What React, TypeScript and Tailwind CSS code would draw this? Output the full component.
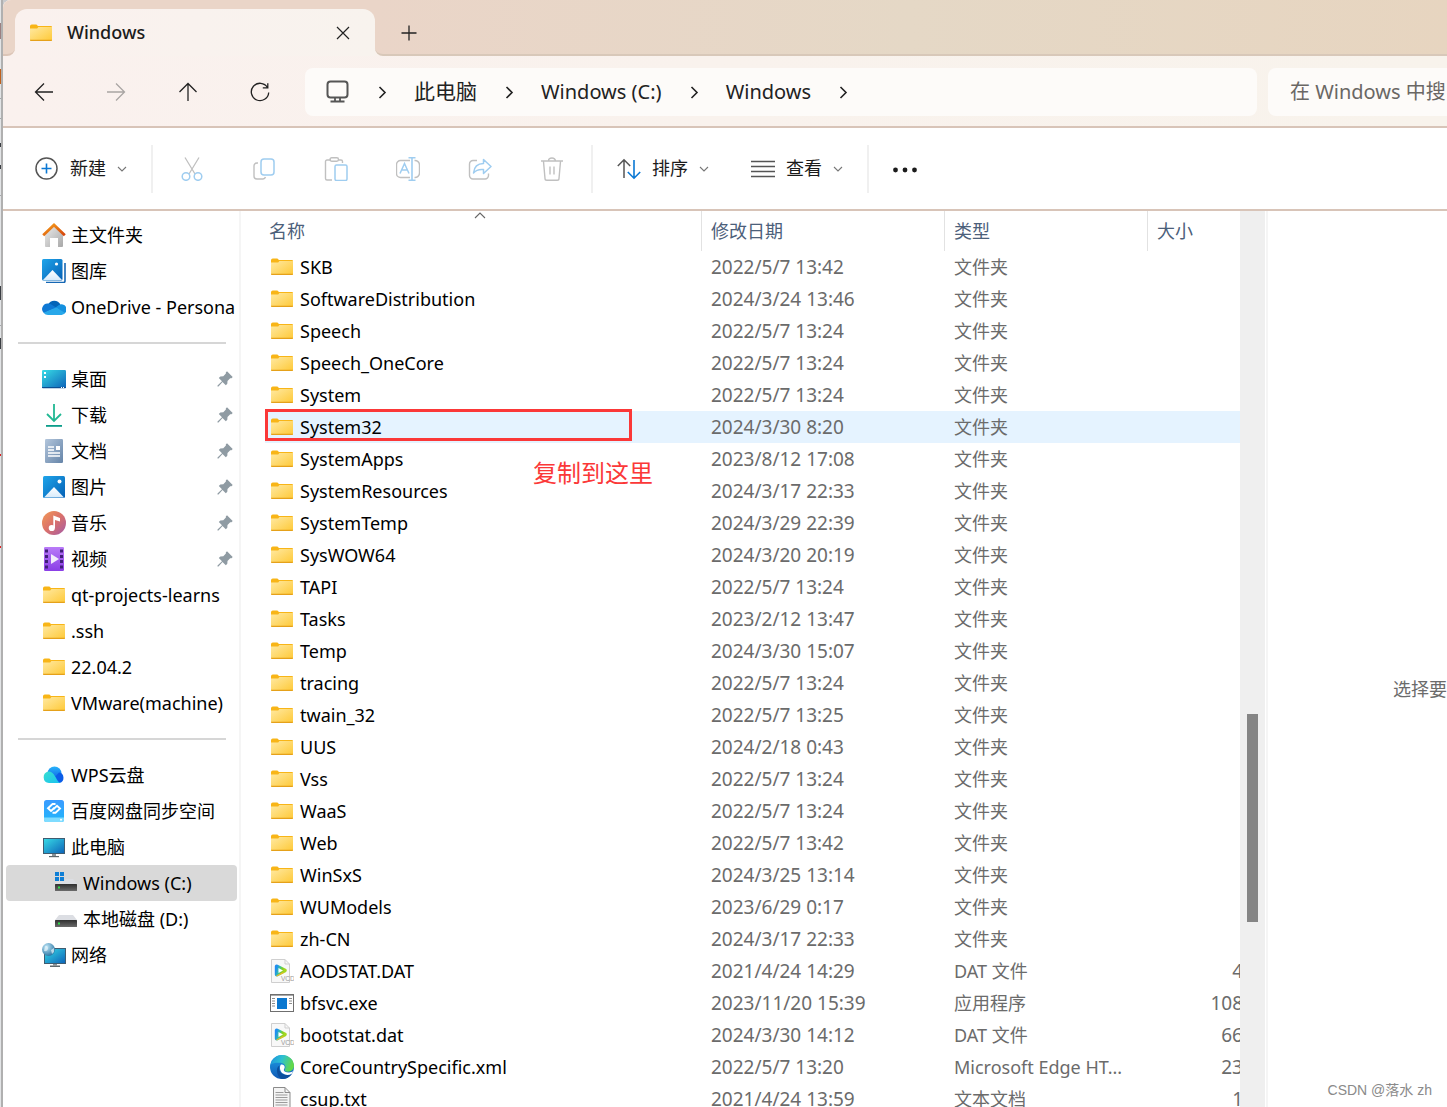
import type { ReactNode } from "react";

type SvgProps = { children: ReactNode; size?: number; box?: string };

function Svg({ children, size = 24, box = "0 0 24 24" }: SvgProps) {
  return (
    <svg width={size} height={size} viewBox={box} fill="none" className="shrink-0" aria-hidden="true">
      {children}
    </svg>
  );
}

function Gradients() {
  return (
    <svg width="0" height="0" className="absolute" aria-hidden="true">
      <defs>
        <linearGradient id="folder" x1="0" y1="0" x2="1" y2="1">
          <stop offset="0" stopColor="#ffe9a2" />
          <stop offset="1" stopColor="#fec937" />
        </linearGradient>
        <linearGradient id="wall" x1="0" y1="0" x2="1" y2="1">
          <stop offset="0" stopColor="#ededed" />
          <stop offset="1" stopColor="#a8a8a8" />
        </linearGradient>
        <linearGradient id="roof" x1="0" y1="0" x2="1" y2="1">
          <stop offset="0" stopColor="#f7a11c" />
          <stop offset="1" stopColor="#d4420b" />
        </linearGradient>
        <linearGradient id="photo" x1="0" y1="0" x2="1" y2="1">
          <stop offset="0" stopColor="#1fa5ea" />
          <stop offset="1" stopColor="#0560b5" />
        </linearGradient>
        <linearGradient id="hill" x1="0" y1="0" x2="0" y2="1">
          <stop offset="0" stopColor="#ffffff" />
          <stop offset="1" stopColor="#d7ebfb" />
        </linearGradient>
        <linearGradient id="screen" x1="0" y1="0" x2="1" y2="1">
          <stop offset="0" stopColor="#38dce6" />
          <stop offset="1" stopColor="#0c62b8" />
        </linearGradient>
        <linearGradient id="paper" x1="0" y1="0" x2="1" y2="1">
          <stop offset="0" stopColor="#b3c6dc" />
          <stop offset="1" stopColor="#6584a8" />
        </linearGradient>
        <linearGradient id="music" x1="0" y1="0" x2="1" y2="1">
          <stop offset="0" stopColor="#f39a55" />
          <stop offset="0.5" stopColor="#d9706b" />
          <stop offset="1" stopColor="#a45ba8" />
        </linearGradient>
        <linearGradient id="video" x1="0" y1="0" x2="0" y2="1">
          <stop offset="0" stopColor="#b97bf8" />
          <stop offset="1" stopColor="#8a3ee6" />
        </linearGradient>
        <linearGradient id="baidu" x1="0" y1="0" x2="0" y2="1">
          <stop offset="0" stopColor="#3b9bff" />
          <stop offset="1" stopColor="#20b6fb" />
        </linearGradient>
        <linearGradient id="drive" x1="0" y1="0" x2="0" y2="1">
          <stop offset="0" stopColor="#2f2f2f" />
          <stop offset="1" stopColor="#6b6b6b" />
        </linearGradient>
        <linearGradient id="wpsLeft" x1="0" y1="0" x2="1" y2="1">
          <stop offset="0" stopColor="#37dfd0" />
          <stop offset="1" stopColor="#1bc1f0" />
        </linearGradient>
        <linearGradient id="wpsTop" x1="0" y1="0" x2="0" y2="1">
          <stop offset="0" stopColor="#27b4fb" />
          <stop offset="1" stopColor="#0b57e3" />
        </linearGradient>
        <linearGradient id="play" x1="0" y1="0" x2="1" y2="0.3">
          <stop offset="0" stopColor="#1f8df1" />
          <stop offset="0.4" stopColor="#35c2a0" />
          <stop offset="0.7" stopColor="#7fd026" />
          <stop offset="1" stopColor="#a5d61f" />
        </linearGradient>
        <linearGradient id="edgeTop" x1="0" y1="0" x2="1" y2="0.3">
          <stop offset="0" stopColor="#1d8fdc" />
          <stop offset="0.5" stopColor="#2cc0d2" />
          <stop offset="1" stopColor="#62d84a" />
        </linearGradient>
        <linearGradient id="edgeLeft" x1="0" y1="0" x2="0" y2="1">
          <stop offset="0" stopColor="#1f9fe6" />
          <stop offset="1" stopColor="#0f59b5" />
        </linearGradient>
        <radialGradient id="globe" cx="0.35" cy="0.3" r="0.8">
          <stop offset="0" stopColor="#bfe6f7" />
          <stop offset="1" stopColor="#1e6c9c" />
        </radialGradient>
      </defs>
    </svg>
  );
}

const FolderIcon = () => (
  <Svg>
    <path d="M1 5.2a1.8 1.8 0 0 1 1.8-1.8h4.6l1.6 1.7H22a1 1 0 0 1 1 1V9H1z" fill="#f8b517" />
    <path d="M1 7.6h7.2L9.4 6H23v13a1 1 0 0 1-1 1H2a1 1 0 0 1-1-1z" fill="url(#folder)" />
    <path d="M1 18.8V19a1 1 0 0 0 1 1h20a1 1 0 0 0 1-1v-.2z" fill="#e5a11a" />
  </Svg>
);

const HomeIcon = () => (
  <Svg>
    <path d="M3 10 12 2l9 8v13a1 1 0 0 1-1 1h-4v-9H8v9H3.800a1 1 0 0 1-.8-1z" fill="url(#wall)" />
    <path d="M1.200 12.200 12 2l10.800 10.200" stroke="url(#roof)" strokeWidth="2.800" />
  </Svg>
);

const GalleryIcon = () => (
  <Svg>
    <path d="M23 4v18a1.500 1.500 0 0 1-1.500 1.500H4" stroke="#1667b4" strokeWidth="1.600" />
    <rect x="0" y="0" width="20.500" height="21.500" rx="1.500" fill="url(#photo)" />
    <path d="M1 21 10.500 11 20 21z" fill="url(#hill)" />
    <circle cx="14.500" cy="5" r="1.600" fill="#fff" />
  </Svg>
);

const OneDriveIcon = () => (
  <Svg>
    <path d="M6 9.500A7 7 0 0 1 18.500 9.500L12 15z" fill="#0364b8" />
    <path d="M5.500 8.500A5.600 5.600 0 0 0 2 18.300L14.500 12.800 9 9.300a6 6 0 0 0-3.500-.8z" fill="#0f78d4" />
    <path d="M13.500 12.500 17 9.900a5 5 0 0 1 5 8.800z" fill="#1490df" />
    <path d="M1.600 17.800 14 12.600l8.900 5.200a4 4 0 0 1-3.300 2.200H6a5.500 5.500 0 0 1-4.400-2.200z" fill="#28a8ea" />
  </Svg>
);

const DesktopIcon = () => (
  <Svg>
    <rect x="0" y="3" width="24" height="18" rx="1.200" fill="url(#screen)" />
    <path d="M0 20h24v.4a.8.8 0 0 1-.8.8H.8A.8.8 0 0 1 0 20.400z" fill="#0b4f93" />
    <path d="M2 5h2v2H2zM2 9h2v2H2zM19 20h1v1h-1zM21 20h1v1h-1z" fill="#fff" />
  </Svg>
);

const DownloadIcon = () => (
  <Svg>
    <path d="M12 1v17M5 11l7 7 7-7" stroke="#21b893" strokeWidth="1.800" />
    <rect x="4" y="22" width="16" height="1.800" fill="#0c9d8a" />
  </Svg>
);

const DocumentIcon = () => (
  <Svg>
    <rect x="3" y="0" width="18" height="24" rx="1.200" fill="url(#paper)" />
    <path d="M6 8h6M6 11h6M6 14h12M6 17h12" stroke="#fff" strokeWidth="1.300" />
    <rect x="14" y="7" width="4" height="4" fill="#fff" />
  </Svg>
);

const PictureIcon = () => (
  <Svg>
    <rect x="1" y="1" width="22" height="22" rx="1.500" fill="url(#photo)" />
    <path d="M2 22.500 12 12l10 10.500z" fill="url(#hill)" />
    <circle cx="17.500" cy="6.500" r="2" fill="#fff" />
  </Svg>
);

const MusicIcon = () => (
  <Svg>
    <circle cx="12" cy="12" r="12" fill="url(#music)" />
    <circle cx="9.800" cy="17" r="3.100" fill="#fff" />
    <path d="M11.300 4.500 18 7v3.500l-5-1.600V17h-1.700z" fill="#fff" />
  </Svg>
);

const VideoIcon = () => (
  <Svg>
    <rect x="2" y="0" width="20" height="24" rx="1.200" fill="url(#video)" />
    <path
      d="M3 2.500h3v3H3zM3 8h3v3H3zM3 13h3v3H3zM3 18.500h3v3H3zM18 2.500h3v3h-3zM18 8h3v3h-3zM18 13h3v3h-3zM18 18.500h3v3h-3z"
      fill="#41207a"
    />
    <path d="M9 7v10l8-5z" fill="#f3ecfb" />
  </Svg>
);

const WpsIcon = () => (
  <Svg>
    <circle cx="12.500" cy="10.500" r="7" fill="url(#wpsTop)" />
    <path d="M17 9.500a5.400 5.400 0 0 1 .6 10.500H8l5-6z" fill="#0b5de8" />
    <path d="M6.500 8.500c3.500 0 5.500 2.500 7 5.500S17 20 19 20H7A5.800 5.800 0 0 1 6.500 8.500z" fill="url(#wpsLeft)" />
  </Svg>
);

const BaiduIcon = () => (
  <Svg>
    <rect x="2" y="1" width="20" height="22" rx="2.500" fill="url(#baidu)" />
    <path d="M2 18.500h20V21a2 2 0 0 1-2 2H4a2 2 0 0 1-2-2z" fill="#7fdcff" />
    <path d="M13.500 5 10.500 5 6 9.200 9 12l3.500-3.300" stroke="#fff" strokeWidth="1.900" />
    <path d="M10.500 13.800h3L18 9.600 15 6.800 11.500 10.100" stroke="#fff" strokeWidth="1.900" />
    <circle cx="19" cy="20.800" r="1" fill="#fff" />
  </Svg>
);

const ComputerIcon = () => (
  <Svg>
    <rect x="1.500" y="3.500" width="21" height="15" fill="url(#screen)" stroke="#3f5c70" />
    <path d="M10 19h4v2h-4z" fill="#8b9499" />
    <path d="M7 21h10v1.200H7z" fill="#5d666b" />
  </Svg>
);

const driveBody = (
  <>
    <path d="M5 8h14l4 5H1z" fill="#dcdee3" />
    <rect x="1" y="13" width="22" height="7" rx="0.500" fill="url(#drive)" />
    <rect x="4" y="15.500" width="2" height="2" fill="#2fe04a" />
  </>
);

const DriveIcon = () => <Svg>{driveBody}</Svg>;

const SystemDriveIcon = () => (
  <Svg>
    {driveBody}
    <path d="M0 0h11v10H0z" fill="#d9d9d9" />
    <path d="M1 1h4v4H1zM6 1h4v4H6zM1 6h4v4H1zM6 6h4v4H6z" fill="#0f7fd6" />
  </Svg>
);

const NetworkIcon = () => (
  <Svg>
    <rect x="2.500" y="5.500" width="21" height="15" fill="url(#screen)" stroke="#3f5c70" />
    <path d="M11 21h4v1.500h-4z" fill="#8b9499" />
    <path d="M8 22.500h10V24H8z" fill="#5d666b" />
    <circle cx="6.500" cy="6.500" r="6.500" fill="url(#globe)" />
    <path d="M3 3.500c2-1 3 0 3 2s-2 3-4 2.500zM9 7l3-2v4l-2 2z" fill="#e8f6fc" opacity="0.700" />
  </Svg>
);

const VcdIcon = () => (
  <Svg>
    <path d="M1.500.5H15l4.500 4.500v18.500h-18z" fill="#f8f8f8" stroke="#cfcfcf" />
    <path d="M15 .5V5h4.500" stroke="#cfcfcf" />
    <path d="M6.800 7.500v8l8-4z" stroke="url(#play)" strokeWidth="4" strokeLinejoin="round" />
    <path d="m7 16.800 6-3" stroke="#f3b52a" strokeWidth="1.200" strokeLinecap="round" />
    <path d="M8.500 9v5l4.500-2.500z" fill="#fff" />
    <text x="11" y="22" fontSize="6.500" fill="#9a9a9a" className="font-['Liberation_Sans']">VCD</text>
  </Svg>
);

const ExeIcon = () => (
  <Svg>
    <rect x="0.500" y="3.500" width="23" height="17" fill="#fff" stroke="#6f6f6f" />
    <path d="M0 3.800h24" stroke="#6f6f6f" strokeWidth="1.600" />
    <rect x="7" y="7" width="10" height="11" fill="#0b78d0" />
    <path d="M2 7.500h3M2 10h3M2 12.500h3M2 15h3M19 7.500h3M19 10h3M19 12.500h3" stroke="#8c8c8c" />
  </Svg>
);

const EdgeIcon = () => (
  <Svg>
    <circle cx="12" cy="12" r="12" fill="url(#edgeLeft)" />
    <path d="M.6 9.500C2.200 3.200 7 0 12 0c7 0 12 5 12 10.800 0 3.700-2.800 5.900-6 5.900-2.800 0-4-1.200-3.200-2.300 1.800-2.800.2-6.400-4.600-6.700C6 7.400 2.500 8 .6 9.500z" fill="url(#edgeTop)" />
    <path d="M9.500 10.500c-2 5.500 2.500 9.800 7.500 9.500 2.500-.2 4-1 5-1.600C19.800 22 16.200 24 12.300 24 7.500 23.500 4.500 13 9.500 10.500z" fill="#0c4f9e" />
    <path d="M10.700 9.700c1.700-.8 4 .2 4 2.500 0 1.200-.9 1.900-.9 2.800 0 1.500 2.200 2.600 5.200 2.500 2-.1 3.400-.9 4-1.300-.3 1-.8 1.900-1.300 2.500-2.700 1.600-6.200 1.600-8.700-.1-2.600-1.800-4-5.500-2.300-8.900z" fill="#fff" />
  </Svg>
);

const TextIcon = () => (
  <Svg>
    <path d="M3.500.5h11.500l5 5v18h-16.500z" fill="#f4f4f4" stroke="#8b8b8b" />
    <path d="M15 .5v5h5" stroke="#8b8b8b" />
    <path d="M5.500 5.500h8M5.500 8h12M5.500 10.500h12M5.500 13h12M5.500 15.500h12M5.500 18h12M5.500 20.500h12" stroke="#9b9b9b" />
  </Svg>
);

const PinIcon = () => (
  <Svg size={16} box="0 0 16 16">
    <path d="M10 .3 15.700 6l-1.200 1.300-1.300-.1-2.700 2.800-.2 2.800-1.500 1.500-3.300-3.300L1.500 15.500.5 15.500v-1L5 10.200 1.800 7 3.300 5.500l3-.3L8.900 2.500l-.1-1z" fill="#8f9ba3" />
  </Svg>
);

const Chevron = () => (
  <Svg size={10} box="0 0 10 10">
    <path d="m1 3 4 4 4-4" stroke="#777" strokeWidth="1.100" />
  </Svg>
);

const Crumb = () => (
  <Svg size={14} box="0 0 14 14">
    <path d="m4.500 2 5.500 5.500-5.500 5.500" stroke="#222" strokeWidth="1.600" />
  </Svg>
);

type Place = { name: string; icon: () => ReactNode; pinned?: boolean; nested?: boolean; active?: boolean };

const places: Place[][] = [
  [
    { name: "主文件夹", icon: HomeIcon },
    { name: "图库", icon: GalleryIcon },
    { name: "OneDrive - Persona", icon: OneDriveIcon },
  ],
  [
    { name: "桌面", icon: DesktopIcon, pinned: true },
    { name: "下载", icon: DownloadIcon, pinned: true },
    { name: "文档", icon: DocumentIcon, pinned: true },
    { name: "图片", icon: PictureIcon, pinned: true },
    { name: "音乐", icon: MusicIcon, pinned: true },
    { name: "视频", icon: VideoIcon, pinned: true },
    { name: "qt-projects-learns", icon: FolderIcon },
    { name: ".ssh", icon: FolderIcon },
    { name: "22.04.2", icon: FolderIcon },
    { name: "VMware(machine)", icon: FolderIcon },
  ],
  [
    { name: "WPS云盘", icon: WpsIcon },
    { name: "百度网盘同步空间", icon: BaiduIcon },
    { name: "此电脑", icon: ComputerIcon },
    { name: "Windows (C:)", icon: SystemDriveIcon, nested: true, active: true },
    { name: "本地磁盘 (D:)", icon: DriveIcon, nested: true },
    { name: "网络", icon: NetworkIcon },
  ],
];

type Entry = { name: string; date: string; type?: string; size?: string; icon?: () => ReactNode };

const entries: Entry[] = [
  { name: "SKB", date: "2022/5/7 13:42" },
  { name: "SoftwareDistribution", date: "2024/3/24 13:46" },
  { name: "Speech", date: "2022/5/7 13:24" },
  { name: "Speech_OneCore", date: "2022/5/7 13:24" },
  { name: "System", date: "2022/5/7 13:24" },
  { name: "System32", date: "2024/3/30 8:20" },
  { name: "SystemApps", date: "2023/8/12 17:08" },
  { name: "SystemResources", date: "2024/3/17 22:33" },
  { name: "SystemTemp", date: "2024/3/29 22:39" },
  { name: "SysWOW64", date: "2024/3/20 20:19" },
  { name: "TAPI", date: "2022/5/7 13:24" },
  { name: "Tasks", date: "2023/2/12 13:47" },
  { name: "Temp", date: "2024/3/30 15:07" },
  { name: "tracing", date: "2022/5/7 13:24" },
  { name: "twain_32", date: "2022/5/7 13:25" },
  { name: "UUS", date: "2024/2/18 0:43" },
  { name: "Vss", date: "2022/5/7 13:24" },
  { name: "WaaS", date: "2022/5/7 13:24" },
  { name: "Web", date: "2022/5/7 13:42" },
  { name: "WinSxS", date: "2024/3/25 13:14" },
  { name: "WUModels", date: "2023/6/29 0:17" },
  { name: "zh-CN", date: "2024/3/17 22:33" },
  { name: "AODSTAT.DAT", date: "2021/4/24 14:29", type: "DAT 文件", size: "4", icon: VcdIcon },
  { name: "bfsvc.exe", date: "2023/11/20 15:39", type: "应用程序", size: "108", icon: ExeIcon },
  { name: "bootstat.dat", date: "2024/3/30 14:12", type: "DAT 文件", size: "66", icon: VcdIcon },
  { name: "CoreCountrySpecific.xml", date: "2022/5/7 13:20", type: "Microsoft Edge HT...", size: "23", icon: EdgeIcon },
  { name: "csup.txt", date: "2021/4/24 13:59", type: "文本文档", size: "1", icon: TextIcon },
];

function TitleBar() {
  return (
    <div className="flex h-14 shrink-0 items-end bg-[#ead5c8]">
      <div className="h-full w-3 bg-[#faf1ee]">
        <div className="h-full rounded-br-lg border-b-2 border-[#dcc5b7] bg-[#ead5c8]" />
      </div>
      <div className="flex h-[47px] w-[360px] items-center rounded-t-xl bg-linear-to-r from-[#faf1ee] to-[#f8f3ee] pr-6 pl-[14px]">
        <FolderIcon />
        <span className="ml-[14px] flex-1 text-[18px] font-medium text-[#1b1b1b]">Windows</span>
        <button aria-label="关闭标签页" className="p-px">
          <Svg size={14} box="0 0 14 14">
            <path d="m1 1 12 12M13 1 1 13" stroke="#222" strokeWidth="1.200" />
          </Svg>
        </button>
      </div>
      <div className="h-full flex-1 bg-[#f9f2ed]">
        <div className="flex h-full items-center rounded-bl-lg border-b-2 border-[#d8c8b9] bg-linear-to-r from-[#ead5c8] via-[#e5d8c6] to-[#e7d5c0] pt-3 pl-[26px]">
          <button aria-label="新建标签页">
            <Svg size={16} box="0 0 16 16">
              <path d="M8 .5v15M.5 8h15" stroke="#222" strokeWidth="1.300" />
            </Svg>
          </button>
        </div>
      </div>
    </div>
  );
}

function NavBar() {
  const nav = "flex w-[72px] items-center justify-center";
  return (
    <div className="flex h-[72px] shrink-0 items-stretch border-b-2 border-[#d8c4b8] bg-linear-to-r from-[#faf1ee] to-[#f8f3ec] pt-3 pb-[10px] pl-[5px]">
      <button className={nav} aria-label="后退">
        <Svg size={20} box="0 0 20 20"><path d="M19 10H2M10 1.500 1.500 10l8.500 8.500" stroke="#222" strokeWidth="1.300" /></Svg>
      </button>
      <button className={nav} aria-label="前进" disabled>
        <Svg size={20} box="0 0 20 20"><path d="M1 10h17M10 1.500l8.500 8.500-8.500 8.500" stroke="#a9a5a3" strokeWidth="1.300" /></Svg>
      </button>
      <button className={nav} aria-label="向上">
        <Svg size={20} box="0 0 20 20"><path d="M10 19V2M1.500 10 10 1.500l8.500 8.500" stroke="#222" strokeWidth="1.300" /></Svg>
      </button>
      <button className={nav} aria-label="刷新">
        <Svg size={20} box="0 0 20 20">
          <path d="M17.500 5.500A8.700 8.700 0 1 0 18.700 10.500M17.800 1.200v4.600h-5" stroke="#222" strokeWidth="1.300" />
        </Svg>
      </button>
      <nav aria-label="地址" className="ml-[9px] flex flex-1 items-center gap-[25px] rounded-lg bg-[#fdfbf9] pl-[21px] text-[20px] text-[#222]">
        <Svg size={24}>
          <rect x="1.500" y="1.500" width="20" height="16" rx="3" stroke="#555" strokeWidth="2" />
          <path d="M9 18v3.500M14 18v3.500M4.500 21.500h14" stroke="#555" strokeWidth="1.800" />
        </Svg>
        <Crumb />
        <a href="#pc" className="text-[21px]">此电脑</a>
        <Crumb />
        <a href="#c">Windows (C:)</a>
        <Crumb />
        <a href="#windows">Windows</a>
        <Crumb />
      </nav>
      <input
        type="text"
        aria-label="搜索"
        placeholder="在 Windows 中搜"
        className="ml-[11px] w-[179px] rounded-l-lg bg-[#fdfbf9] pl-[22px] text-[20px] placeholder:text-[#6a6764]"
      />
    </div>
  );
}

function Toolbar() {
  const tool = "flex w-[72px] justify-center";
  const rule = <div className="h-12 w-0.5 bg-[#f0f0f0]" />;
  return (
    <div className="flex h-[83px] shrink-0 items-center border-b-2 border-[#d8c4b8] bg-white text-[18px] text-[#1b1b1b]">
      <button className="mr-6 ml-8 flex items-center gap-[11px]">
        <Svg size={24}>
          <circle cx="11.500" cy="11.500" r="10.500" stroke="#555" strokeWidth="1.500" />
          <path d="M11.500 6.500v10M6.500 11.500h10" stroke="#0a78d4" strokeWidth="1.600" />
        </Svg>
        <span>新建</span>
        <Chevron />
      </button>
      {rule}
      <div className="mx-[3px] flex">
        <button className={tool} aria-label="剪切" disabled>
          <Svg>
            <path d="M5 .5 15 17M19 .5 9 17" stroke="#c0c0c0" strokeWidth="1.300" />
            <circle cx="6" cy="19.500" r="3.800" stroke="#9fcdf0" strokeWidth="1.500" />
            <circle cx="18" cy="19.500" r="3.800" stroke="#9fcdf0" strokeWidth="1.500" />
          </Svg>
        </button>
        <button className={tool} aria-label="复制" disabled>
          <Svg>
            <path d="M6 6H5a3 3 0 0 0-3 3v10a3 3 0 0 0 3 3h6a3 3 0 0 0 2.500-2" stroke="#c0c0c0" strokeWidth="1.400" />
            <rect x="9" y="2" width="13" height="16" rx="3" stroke="#9fcdf0" strokeWidth="1.500" />
          </Svg>
        </button>
        <button className={tool} aria-label="粘贴" disabled>
          <Svg>
            <path d="M7 3H3a1.500 1.500 0 0 0-1.500 1.500v17A1.500 1.500 0 0 0 3 23h5M14.500 3H17a1.500 1.500 0 0 1 1.500 1.500V6" stroke="#c0c0c0" strokeWidth="1.400" />
            <rect x="6" y="0.800" width="8.500" height="3.500" rx="1.700" stroke="#c0c0c0" strokeWidth="1.400" />
            <rect x="11" y="8" width="12" height="15.500" rx="1.500" stroke="#9fcdf0" strokeWidth="1.500" />
          </Svg>
        </button>
        <button className={tool} aria-label="重命名" disabled>
          <Svg>
            <path d="M14 3.500H4.500a4 4 0 0 0-4 4v9a4 4 0 0 0 4 4H14M18.500 3.500a4.500 4.500 0 0 1 5 4.500v8a4.500 4.500 0 0 1-5 4.500" stroke="#c0c0c0" strokeWidth="1.400" />
            <path d="M12.500 .8h7M12.500 23.200h7M16 .8v22.400" stroke="#9fcdf0" strokeWidth="1.600" />
            <path d="m4 16.500 4.500-10L13 16.500M5.500 13h6" stroke="#9fcdf0" strokeWidth="1.500" />
          </Svg>
        </button>
        <button className={tool} aria-label="共享" disabled>
          <Svg>
            <path d="M9 3.500H5A3.500 3.500 0 0 0 1.500 7v11.500A3.500 3.500 0 0 0 5 22h12a3.500 3.500 0 0 0 3.500-3.500v-2" stroke="#c0c0c0" strokeWidth="1.400" />
            <path d="M15.500 2.500 23 9.500l-7.500 7v-4C10.500 12 8 13 5.500 16 6 11 9 6.500 15.500 6.500z" stroke="#9fcdf0" strokeWidth="1.500" strokeLinejoin="round" />
          </Svg>
        </button>
        <button className={tool} aria-label="删除" disabled>
          <Svg>
            <path d="M1 4h22M3.500 4.500 5 21.500a1.800 1.800 0 0 0 1.800 1.800h10.400a1.800 1.800 0 0 0 1.800-1.800l1.500-17M8.500 4a3.500 3 0 0 1 7 0M10 9.500v8M14 9.500v8" stroke="#c0c0c0" strokeWidth="1.400" />
          </Svg>
        </button>
      </div>
      {rule}
      <button className="mr-[42px] ml-6 flex items-center gap-[11px]">
        <Svg>
          <path d="M7 21V3M.8 9 7 2.800 13.200 9" stroke="#555" strokeWidth="1.500" />
          <path d="M17 3v18M10.800 15l6.200 6.200 6.200-6.200" stroke="#0a78d4" strokeWidth="1.600" />
        </Svg>
        <span>排序</span>
        <Chevron />
      </button>
      <button className="mr-6 flex items-center gap-[11px]">
        <Svg>
          <path d="M0 4.500h24M0 9.500h24M0 14.500h24M0 19.500h24" stroke="#555" strokeWidth="1.300" />
        </Svg>
        <span>查看</span>
        <Chevron />
      </button>
      {rule}
      <button className="ml-6" aria-label="更多">
        <Svg>
          <circle cx="2.500" cy="13" r="2.400" fill="#1b1b1b" />
          <circle cx="12" cy="13" r="2.400" fill="#1b1b1b" />
          <circle cx="21.500" cy="13" r="2.400" fill="#1b1b1b" />
        </Svg>
      </button>
    </div>
  );
}

function Sidebar() {
  return (
    <aside className="w-[238px] shrink-0 overflow-hidden border-r-2 border-[#f5f5f5] pt-[6px] text-[18px] text-black">
      {places.map((group, i) => (
        <div key={i}>
          {i > 0 && (
            <div className="flex h-9 items-center pr-[13px] pl-[15px]">
              <hr className="w-full border-t-2 border-[#d6d6d6]" />
            </div>
          )}
          <ul>
            {group.map(({ name, icon: Icon, pinned, nested, active }) => (
              <li key={name} className={active ? "mr-0.5 ml-[3px] rounded-sm bg-[#d9d9d9]" : "ml-[3px]"}>
                <a href="#place" className={`flex h-9 items-center gap-[5px] whitespace-nowrap ${nested ? "pl-12" : "pl-9"}`}>
                  <Icon />
                  <span className="flex-1">{name}</span>
                  {pinned && <span className="mr-[6px]"><PinIcon /></span>}
                </a>
              </li>
            ))}
          </ul>
        </div>
      ))}
    </aside>
  );
}

function FileList() {
  const head = "border-r border-[#e2e2e2] text-left font-normal";
  return (
    <div className="relative min-w-0 flex-1 overflow-hidden pl-6 text-[18px] whitespace-nowrap">
      <table className="w-[1008px] table-fixed border-separate border-spacing-0 text-[#6b6b6b]">
        <colgroup>
          <col className="w-[437px]" />
          <col className="w-[243px]" />
          <col className="w-[203px]" />
          <col className="w-[125px]" />
        </colgroup>
        <thead>
          <tr className="h-10 text-[#4c607a]">
            <th className={`${head} relative pl-1`}>
              名称
              <span className="absolute top-0 left-[209px]">
                <Svg size={12} box="0 0 12 12"><path d="m1 7 5-5 5 5" stroke="#666" strokeWidth="1.100" /></Svg>
              </span>
            </th>
            <th className={`${head} pl-[9px]`}>修改日期</th>
            <th className={`${head} pl-[9px]`}>类型</th>
            <th className="pl-[9px] text-left font-normal">大小</th>
          </tr>
        </thead>
        <tbody>
          {entries.map(({ name, date, type = "文件夹", size, icon: Icon = FolderIcon }) => {
            const marked = name === "System32";
            return (
              <tr key={name} className={marked ? "h-8 bg-[#e5f3ff]" : "h-8"}>
                <td className="relative p-0 pl-[5px]">
                  <span className="flex items-center gap-[6px] text-black">
                    <Icon />
                    {name}
                  </span>
                  {marked && (
                    <>
                      <span className="absolute -top-0.5 left-0 h-8 w-[367px] border-3 border-[#fb3838]" />
                      <span className="absolute top-11 left-[268px] text-[24px] leading-9 text-[#fb3838]">复制到这里</span>
                    </>
                  )}
                </td>
                <td className="p-0 pl-[9px] text-[19px]">{date}</td>
                <td className="p-0 pl-[9px]">{type}</td>
                <td className="p-0 pr-[30px] text-right text-[19px]">{size}</td>
              </tr>
            );
          })}
        </tbody>
      </table>
    </div>
  );
}

function BackdropEdge() {
  return (
    <div className="w-[3px] shrink-0 overflow-hidden border-r-2 border-[#b0b0b0] bg-[#e2e4e6]">
      <svg width="1" height="560" viewBox="0 0 1 560" aria-hidden="true">
        <path d="M.5 23v16" stroke="#9b7f80" />
        <path d="M.5 69v15" stroke="#c0601c" />
        <path d="M.5 143v4M.5 165v4M.5 286v14M.5 338v11" stroke="#3a3d42" />
        <path d="M.5 98v1M.5 118v1M.5 195v1M.5 325v1" stroke="#a5a8ab" />
        <path d="M.5 454v2M.5 546v2" stroke="#e02020" />
      </svg>
    </div>
  );
}

export default function App() {
  return (
    <div className="flex h-screen overflow-hidden bg-[#c9cacc] font-['Noto_Sans','Noto_Sans_CJK_SC',sans-serif]">
      <Gradients />
      <BackdropEdge />
      <div className="flex min-w-0 flex-1 flex-col overflow-hidden rounded-tl-lg bg-white">
        <TitleBar />
        <NavBar />
        <Toolbar />
        <div className="flex min-h-0 flex-1">
          <Sidebar />
          <FileList />
          <div className="w-[25px] shrink-0 bg-[#efefef] pt-[503px]">
            <div className="ml-[7px] h-52 w-[11px] bg-[#858585]" />
          </div>
          <section className="relative ml-px w-[181px] shrink-0 overflow-hidden border-l-2 border-[#f5f5f5] pt-[465px] pl-[125px] text-[18px] whitespace-nowrap text-[#6b6b6b]">
            选择要
            <span className="absolute right-[15px] bottom-[6px] font-['Liberation_Sans','Noto_Sans_CJK_SC',sans-serif] text-[14px] text-[#8a8a8a]">
              CSDN @落水 zh
            </span>
          </section>
        </div>
      </div>
    </div>
  );
}
